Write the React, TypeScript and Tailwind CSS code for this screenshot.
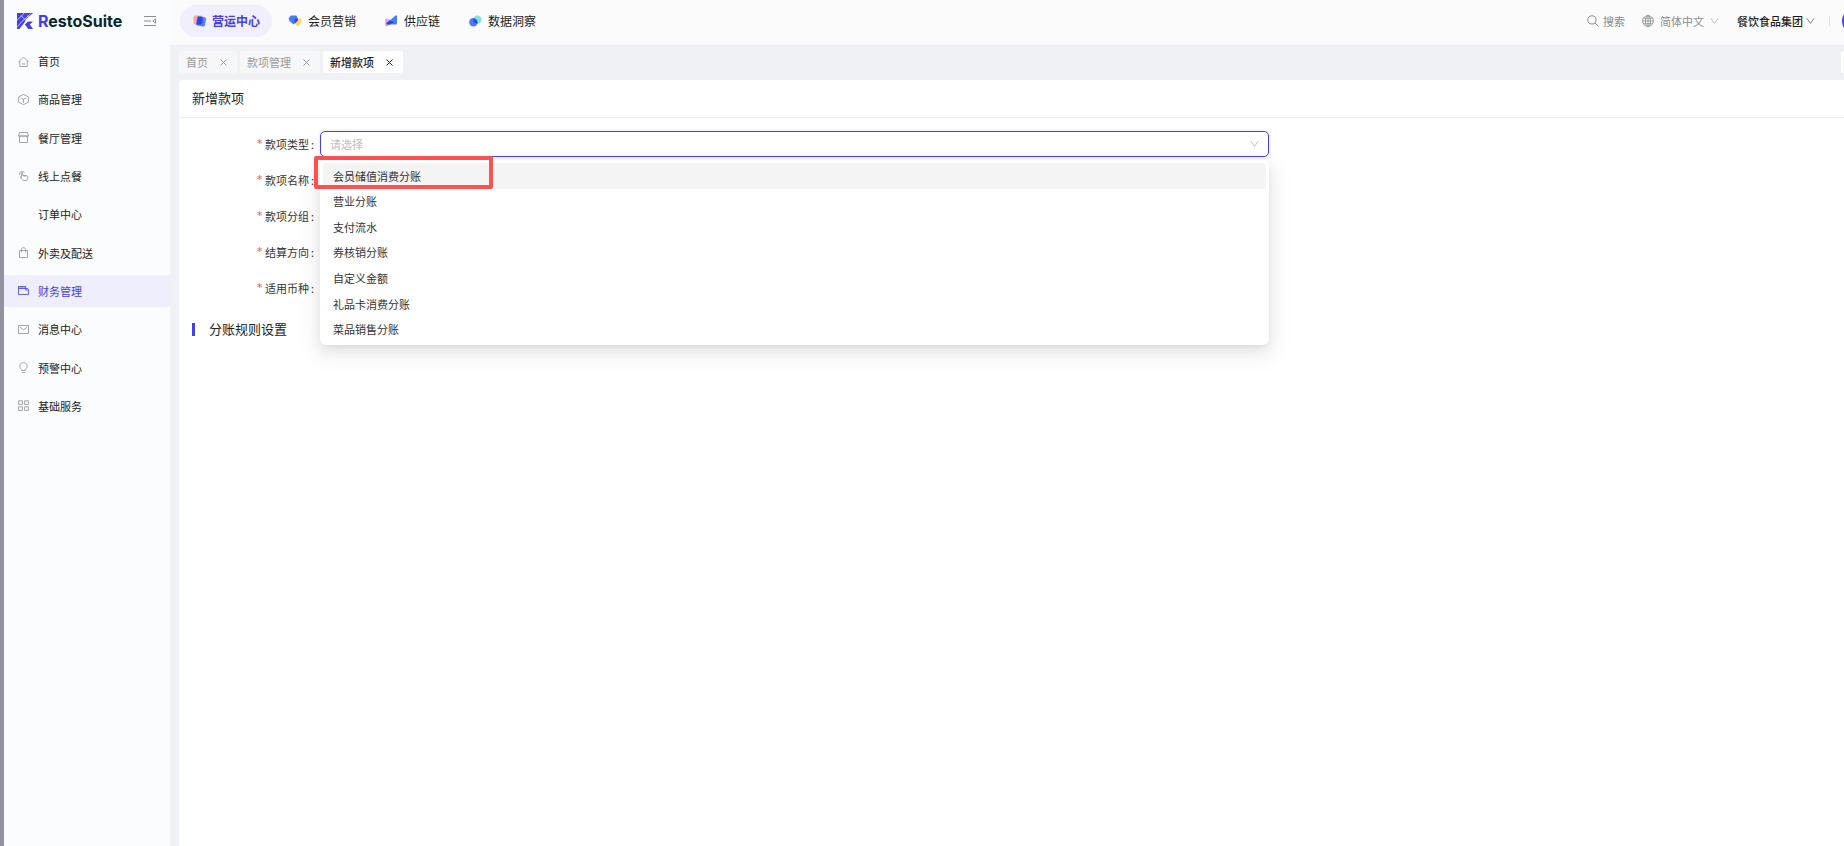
import React from 'react'

const MENUS = [
  {
    content: '首页',
    icon: <path d="M.5 6 5.5 1l5 5M1.8 5v5.5h7.4V5M3.8 8h3.4" />,
  },
  {
    content: '商品管理',
    icon: <path d="M5.5.4 10.4 2.9v5.2L5.5 10.7.6 8.1V2.9zM2.8 3.9l2.7 1.4 2.7-1.4M5.5 5.3v3.4" />,
  },
  {
    content: '餐厅管理',
    icon: <path d="M1.5.5h8l1 3.3H.5zM1.5 4.5v6h8v-6M.5 3.8c.6 1.3 2.6 1.3 3.3 0 .7 1.3 2.7 1.3 3.4 0 .7 1.3 2.7 1.3 3.3 0" />,
  },
  {
    content: '线上点餐',
    icon: (
      <path d="M1.8 4.9A2.5 2.5 0 1 1 6.5 3M3.4 7.7V3.2c0-1 1.3-1 1.3 0v2.3h3.2c1.2 0 1.9.6 1.9 1.7 0 2.4-.8 3.4-2.9 3.4-2 0-2.6-.8-4.5-3.1-.4-.8.5-1.2 1-.5M6.3 5.5v1.2M8 5.5v1.2" />
    ),
  },
  { content: '订单中心', icon: null },
  {
    content: '外卖及配送',
    icon: <path d="M1.5 3.5h8v7h-8zM3.5 5.4V2.3C3.5.1 7.5.1 7.5 2.3v3.1" />,
  },
  {
    content: '财务管理',
    active: true,
    icon: (
      <>
        <path d="M.5 1.5h7.2v2.2H.5z" fill="#b9b6fa" stroke="none" />
        <path d="M.5 9.5v-8h7.2v2h1.8l1 1v5zM.5 3.5h7.2v1.4h2.8" />
      </>
    ),
  },
  {
    content: '消息中心',
    icon: <path d="M.5 1.5h10v8H.5zM1.8 3l3.7 3 3.7-3" />,
  },
  {
    content: '预警中心',
    icon: <path d="M3.7 8.5v-1C.3 5.2 1.8.6 5.5.6s5.2 4.6 1.8 6.9v1zM3.6 10.5h3.8" />,
  },
  {
    content: '基础服务',
    icon: (
      <path d="M.6.8h3.8v3.6H.6zM6.6.8h3.8v3.6H6.6zM.6 6.8h3.8v3.6H.6zM6.6 6.8h3.8v3.6H6.6z" />
    ),
  },
]

const NAVIGATION = [
  {
    content: '营运中心',
    active: true,
    icon: (
      <>
        <rect x="1.5" y="1.5" width="9" height="9" rx="1.8" fill="#fba6a6" />
        <rect x="4.6" y="2.6" width="9" height="9.4" rx="1.8" fill="#5480fb" transform="rotate(10 9 7)" />
        <path d="M5.9 2.8h4.6v5.7q0 2-2 2H4.6z" fill="#2b47e0" />
      </>
    ),
  },
  {
    content: '会员营销',
    icon: (
      <>
        <path d="M7.5 4.4h5q1.6 1.8.8 4.2L9.9 12.4 6.4 9z" fill="#ffd567" />
        <path d="M2.7 1.6h5.6L10 4.4 9.4 7 5.6 10.4 1.4 6.9.8 4.2z" fill="#4c78fb" />
        <path d="M7 4.4h3L9.5 7 7.6 8.8 6.3 7.2z" fill="#2b47e0" />
      </>
    ),
  },
  {
    content: '供应链',
    icon: (
      <>
        <path d="M1.2 5.2q0-1.2 1-.8l9.4 3.4-9 4.4q-1.4.5-1.4-.9z" fill="#d4a7f2" />
        <path d="M13 1.8v7.4q0 1.2-1.2 1.2H3.4L2.2 9.4 11.6 1.6q1.2-.9 1.4.2z" fill="#4c78fb" />
        <path d="M5.6 6.4 10.4 8.2 5.6 10.4H3.4L2.2 9.3z" fill="#2b47e0" />
      </>
    ),
  },
  {
    content: '数据洞察',
    icon: (
      <>
        <circle cx="9.4" cy="5.6" r="4.2" fill="#7ee6d6" />
        <circle cx="5.4" cy="8.3" r="4.2" fill="#4c78fb" />
        <path d="M5.2 5.1a4.2 4.2 0 0 1 4.3 4.6 4.2 4.2 0 0 1-4.3-4.6z" fill="#2b47e0" />
      </>
    ),
  },
]

const TABS = [{ content: '首页' }, { content: '款项管理' }, { content: '新增款项', active: true }]

const FIELDS = [
  { id: 'name', content: '款项名称' },
  { id: 'group', content: '款项分组' },
  { id: 'direction', content: '结算方向' },
  { id: 'currency', content: '适用币种' },
]

const OPTIONS = [
  '会员储值消费分账',
  '营业分账',
  '支付流水',
  '券核销分账',
  '自定义金额',
  '礼品卡消费分账',
  '菜品销售分账',
]

const Chevron = ({ className }: { className: string }) => (
  <svg className={className} viewBox="0 0 10 8" fill="none" stroke="currentColor">
    <path d="M1 1l4 5.6L9 1" />
  </svg>
)

const Logo = () => (
  <a href="#home" className="flex items-center gap-[5px]">
    <svg className="h-4 w-4" viewBox="0 0 16 16">
      <path d="M0 0h16L8.6 6.4 7.8 9 2.4 16H0z" fill="#433ef0" />
      <path d="M7.8 11.4 11 8.6h5l-3.2 2.8L16 16h-4.6z" fill="#433ef0" />
      <path
        d="M0 7.2 7.4 0M4.4 2.8l3.4 3.6M0 14.4 4.4 9 13.6.8M10.4 2.6l1.2 1.6"
        stroke="#fafcfe"
        strokeWidth=".7"
        fill="none"
      />
    </svg>
    <span className="font-[Inter,sans-serif] text-base font-bold text-[#06282c]">
      <span className="text-[#433ef0]">R</span>estoSuite
    </span>
  </a>
)

const Sidebar = () => (
  <aside className="w-[166px] shrink-0 bg-[#fafcfe]">
    <div className="flex h-[45px] items-center justify-between pb-[3px] pl-[13px] pr-[14px]">
      <Logo />
      <button aria-label="收起菜单" className="text-[#8c8c8c]">
        <svg className="h-3 w-3" viewBox="0 0 12 12" fill="none" stroke="currentColor">
          <path d="M0 1.5h12M0 6h7M0 10.5h12" />
          <path d="M11.4 3.9v4.2L8.8 6z" />
        </svg>
      </button>
    </div>
    <nav className="flex h-[377px] flex-col justify-between">
      {MENUS.map(({ content, icon, active }) => (
        <a
          key={content}
          href="#menu"
          className={
            active
              ? 'flex h-8 items-center gap-[9px] bg-[#eeeefc] pl-[14px] text-[#433ef0]'
              : 'flex h-8 items-center gap-[9px] pl-[14px] text-[#222]'
          }
        >
          <svg
            className={active ? 'h-[11px] w-[11px]' : 'h-[11px] w-[11px] text-[#8e8e8e]'}
            viewBox="0 0 11 11"
            fill="none"
            stroke="currentColor"
            strokeWidth=".8"
          >
            {icon}
          </svg>
          {content}
        </a>
      ))}
    </nav>
  </aside>
)

const Header = () => (
  <header className="flex h-[45px] items-center justify-between overflow-hidden bg-[#fbfbfb] pb-[3px] pl-[10px]">
    <nav className="flex gap-1 text-xs">
      {NAVIGATION.map(({ content, icon, active }) => (
        <a
          key={content}
          href="#nav"
          className={
            active
              ? 'flex h-8 items-center gap-[6px] rounded-full bg-[#f0effb] px-3 font-bold text-[#433ef0]'
              : 'flex h-8 items-center gap-[6px] rounded-full px-3 text-[#1c1c1c]'
          }
        >
          <svg className="h-[14px] w-[14px]" viewBox="0 0 14 14">
            {icon}
          </svg>
          {content}
        </a>
      ))}
    </nav>
    <div className="flex shrink-0 items-center text-[#8c8c8c]">
      <button className="mr-[17px] flex items-center gap-1">
        <svg className="h-3 w-3" viewBox="0 0 12 12" fill="none" stroke="currentColor">
          <circle cx="4.9" cy="4.9" r="4.1" />
          <path d="M8 8l3.6 3.6" />
        </svg>
        搜索
      </button>
      <button className="mr-[18px] flex items-center gap-[6px]">
        <svg className="h-3 w-3" viewBox="0 0 12 12" fill="none" stroke="currentColor" strokeWidth=".8">
          <circle cx="6" cy="6" r="5.4" />
          <ellipse cx="6" cy="6" rx="2.6" ry="5.4" />
          <path d="M6 .6v10.8M.6 6h10.8M1.4 3.3h9.2M1.4 8.7h9.2" />
        </svg>
        简体中文
        <Chevron className="h-2 w-[9px] text-[#b5b5b5]" />
      </button>
      <button className="flex items-center gap-[3px] font-medium text-[#1c1c1c]">
        餐饮食品集团
        <Chevron className="h-2 w-[9px] text-[#777]" />
      </button>
      <span className="ml-[14px] h-[10px] w-px bg-[#e2e2e2]" />
      <button aria-label="账户" className="-mr-6 ml-3 h-[26px] w-[26px] rounded-full bg-[#433ef0]" />
    </div>
  </header>
)

const TabBar = () => (
  <div className="flex h-[35px] items-center justify-between overflow-hidden pb-1 pt-[3px]">
    <div className="flex gap-[3px]">
      {TABS.map(({ content, active }) => (
        <div
          key={content}
          className={
            active
              ? 'flex h-[22px] items-center gap-3 rounded-[3px] bg-white pl-[7px] pr-[10px] font-medium text-[#1c1c1c]'
              : 'flex h-[22px] items-center gap-3 rounded-[3px] bg-[#f7f7f9] pl-[7px] pr-[10px] text-[#9a9a9a]'
          }
        >
          <a href="#tab">{content}</a>
          <button aria-label="关闭">
            <svg className="h-[7px] w-[7px]" viewBox="0 0 7 7" stroke="currentColor">
              <path d="M.5.5l6 6M6.5.5l-6 6" />
            </svg>
          </button>
        </div>
      ))}
    </div>
    <button aria-label="更多" className="-mr-5 h-[22px] w-[23px] rounded-[3px] bg-white" />
  </div>
)

const FieldLabel = ({ id, content }: { id: string; content: string }) => (
  <label htmlFor={id} className="flex h-[25px] w-[141px] shrink-0 items-center justify-end pr-[6px]">
    <span className="mr-[2px] font-[DejaVu_Sans_Mono,monospace] text-[#ff4d4f]">*</span>
    {content}
    <span className="pl-[2px]">:</span>
  </label>
)

const TypeDropdown = () => (
  <>
    <ul className="absolute inset-x-0 top-[29px] z-10 grid h-[185px] grid-rows-7 rounded-md bg-white p-[3px] shadow-[0_5px_13px_rgba(0,0,0,0.08),0_2px_5px_-3px_rgba(0,0,0,0.12),0_8px_22px_6px_rgba(0,0,0,0.05)]">
      {OPTIONS.map((option, index) => (
        <li
          key={option}
          className={
            index === 0
              ? 'flex items-center rounded-[3px] bg-[#f4f4f4] pl-[10px]'
              : 'flex items-center rounded-[3px] pl-[10px]'
          }
        >
          {option}
        </li>
      ))}
    </ul>
    <div className="absolute -left-[6px] top-[25px] z-20 h-[33px] w-[179px] rounded-[2px] border-4 border-[#ff5150]" />
  </>
)

const App = () => {
  return (
    <div className="flex min-h-screen border-l-4 border-[#9194a0] bg-[#f0f1f5] font-[Noto_Sans_CJK_SC,sans-serif] text-[11px] leading-4 text-[#333]">
      <Sidebar />
      <div className="flex min-w-0 flex-1 flex-col">
        <Header />
        <div className="flex flex-1 flex-col pl-[9px]">
          <TabBar />
          <main className="flex-1 rounded-tl-[3px] bg-white">
            <h1 className="flex h-[38px] items-center border-b border-[#f0f0f0] pb-[2px] pl-[13px] text-[13px] text-[#222]">
              新增款项
            </h1>
            <form className="flex flex-col gap-[10px] pt-[13px]">
              <div className="flex">
                <FieldLabel id="type" content="款项类型" />
                <div className="relative w-[57%]">
                  <select
                    id="type"
                    className="block h-[26px] w-full appearance-none rounded-[5px] border border-[#433ef0] bg-white pl-[9px] text-[#bfbfbf] shadow-[0_0_0_2px_rgba(67,62,240,0.05)] outline-none"
                  >
                    <option>请选择</option>
                  </select>
                  <Chevron className="pointer-events-none absolute right-[10px] top-[9px] h-2 w-[9px] text-[#b5b5b5]" />
                  <TypeDropdown />
                </div>
              </div>
              {FIELDS.map(({ id, content }) => (
                <div key={id} className="flex">
                  <FieldLabel id={id} content={content} />
                  <input id={id} className="h-[26px] w-[57%] rounded-[5px] border border-[#d9d9d9]" />
                </div>
              ))}
            </form>
            <h2 className="mt-5 flex items-center pl-[13px] text-[13px] text-[#222]">
              <span className="mr-[14px] h-[13px] w-[3px] bg-[#433ef0]" />
              分账规则设置
            </h2>
          </main>
        </div>
      </div>
    </div>
  )
}

export default App
